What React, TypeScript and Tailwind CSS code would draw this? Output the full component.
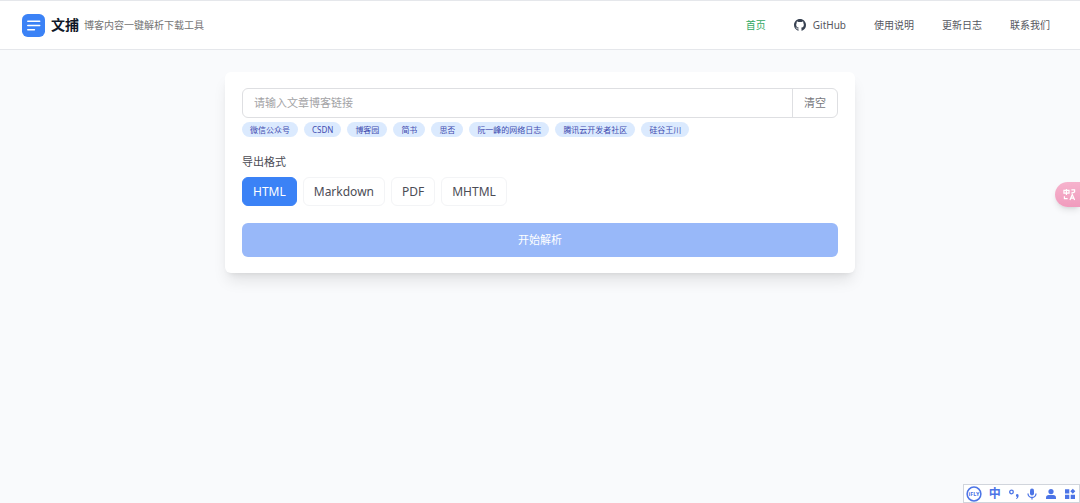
import React, { useState } from "react";
import { clsx } from "clsx";

const NAV_ITEMS = [
  { label: "首页", active: true },
  { label: "GitHub", icon: true },
  { label: "使用说明" },
  { label: "更新日志" },
  { label: "联系我们" },
];

const SITES = [
  "微信公众号",
  "CSDN",
  "博客园",
  "简书",
  "思否",
  "阮一峰的网络日志",
  "腾讯云开发者社区",
  "硅谷王川",
];

const FORMATS = ["HTML", "Markdown", "PDF", "MHTML"];

const Logo: React.FC = () => (
  <svg viewBox="0 0 24 24" className="size-[23px]" aria-hidden="true">
    <rect width="24" height="24" rx="6" fill="#3b82f6" />
    <path
      d="M6 7.5h12.5M6 12h12.5M6 16.5h7"
      stroke="#fff"
      strokeWidth="1.5"
      strokeLinecap="round"
    />
  </svg>
);

const GithubIcon: React.FC = () => (
  <svg viewBox="0 0 16 16" className="size-3" fill="#374151" aria-hidden="true">
    <path d="M8 0C3.58 0 0 3.58 0 8c0 3.54 2.29 6.53 5.47 7.59.4.07.55-.17.55-.38 0-.19-.01-.82-.01-1.49-2.01.37-2.53-.49-2.69-.94-.09-.23-.48-.94-.82-1.13-.28-.15-.68-.52-.01-.53.63-.01 1.08.58 1.23.82.72 1.21 1.87.87 2.33.66.07-.52.28-.87.51-1.07-1.78-.2-3.64-.89-3.64-3.95 0-.87.31-1.59.82-2.15-.08-.2-.36-1.02.08-2.12 0 0 .67-.21 2.2.82.64-.18 1.32-.27 2-.27s1.36.09 2 .27c1.53-1.04 2.2-.82 2.2-.82.44 1.1.16 1.92.08 2.12.51.56.82 1.27.82 2.15 0 3.07-1.87 3.75-3.65 3.95.29.25.54.73.54 1.48 0 1.07-.01 1.93-.01 2.2 0 .21.15.46.55.38A8.01 8.01 0 0 0 16 8c0-4.42-3.58-8-8-8z" />
  </svg>
);

const Header: React.FC = () => (
  <header className="flex h-[50px] items-center justify-between border-t border-b border-gray-200 bg-white pr-[30px] pl-[22px]">
    <div className="flex items-center">
      <Logo />
      <h1 className="ml-1.5 text-sm font-bold text-gray-900">文捕</h1>
      <p className="ml-[5px] text-[10px] text-neutral-500">
        博客内容一键解析下载工具
      </p>
    </div>
    <nav className="flex items-center gap-7 text-[10px]">
      {NAV_ITEMS.map((item) => (
        <a
          key={item.label}
          href="#"
          className={clsx(
            "flex items-center gap-[7px]",
            item.active ? "text-[#2fa862]" : "text-[#55565e]",
          )}
        >
          {item.icon && <GithubIcon />}
          {item.label}
        </a>
      ))}
    </nav>
  </header>
);

const ParseForm: React.FC = () => {
  const [url, setUrl] = useState("");
  const [format, setFormat] = useState("HTML");

  return (
    <form
      className="mx-auto max-w-[630px] rounded-md bg-white px-[17px] py-4 shadow-lg"
      onSubmit={(e) => e.preventDefault()}
    >
      <div className="flex h-[30px] rounded-md border border-[#dedfe2]">
        <input
          type="text"
          aria-label="文章博客链接"
          value={url}
          onChange={(e) => setUrl(e.target.value)}
          placeholder="请输入文章博客链接"
          className="min-w-0 flex-1 px-[11px] text-[11px] outline-none placeholder:text-[#a3a3a6]"
        />
        <button
          type="button"
          onClick={() => setUrl("")}
          className="border-l border-[#dedfe2] px-[11px] text-[11px] text-[#77787d]"
        >
          清空
        </button>
      </div>

      <ul className="mt-1 flex flex-wrap gap-1.5">
        {SITES.map((site) => (
          <li
            key={site}
            className="rounded-full bg-blue-100 px-2 text-[8px] leading-[15px] text-[#3f4bb0]"
          >
            {site}
          </li>
        ))}
      </ul>

      <h2 id="format" className="mt-4 text-[11px] leading-[18px] text-[#4b4c55]">
        导出格式
      </h2>
      <div
        role="group"
        aria-labelledby="format"
        className="mt-1.5 flex flex-wrap gap-1.5"
      >
        {FORMATS.map((item) => (
          <button
            key={item}
            type="button"
            aria-pressed={item === format}
            onClick={() => setFormat(item)}
            className={clsx(
              "h-[29px] rounded-md border px-2.5 text-[12px] leading-4",
              item === format
                ? "border-[#3b82f6] bg-[#3b82f6] text-white"
                : "border-gray-100 bg-white text-[#4b4c55]",
            )}
          >
            {item}
          </button>
        ))}
      </div>

      <button
        type="submit"
        className="mt-[17px] h-[34px] w-full rounded-md bg-[#98b8f9] text-[11px] text-white"
      >
        开始解析
      </button>
    </form>
  );
};

const TranslateTab: React.FC = () => (
  <button
    type="button"
    aria-label="翻译"
    className="fixed top-[182px] right-0 flex h-[25px] w-[25px] items-center rounded-l-full bg-linear-to-b from-[#f6b3cd] to-[#f09bbd] pl-2 shadow-md"
  >
    <svg
      viewBox="0 0 14 14"
      className="size-[13px]"
      fill="none"
      stroke="#fff"
      strokeWidth="1.3"
      aria-hidden="true"
    >
      <path d="M1 2.5h5.5v3H1zM3.7 1v6.5M9 2h3.5v2.5M9 5.5l3.5-1M1.5 9v2.5H5M7.5 13l2.5-6 2.5 6M8.5 11h3" />
    </svg>
  </button>
);

// input method bar in the corner
const ImeBar: React.FC = () => (
  <div className="fixed right-0 bottom-0 flex h-[19px] w-[117px] items-center justify-between border border-gray-300 bg-white pr-[3px] pl-0.5 text-[#4c74e6]">
    <svg viewBox="0 0 16 16" className="size-4" fill="none" aria-hidden="true">
      <circle cx="8" cy="8" r="6.9" stroke="currentColor" strokeWidth="1.5" />
      <text
        x="8"
        y="10"
        textAnchor="middle"
        fontSize="5.5"
        fontWeight="bold"
        fill="currentColor"
      >
        iFLY
      </text>
    </svg>
    <span className="text-[12px] leading-4 font-bold">中</span>
    <svg viewBox="0 0 12 12" className="size-3" aria-hidden="true">
      <circle
        cx="3.5"
        cy="4"
        r="1.8"
        fill="none"
        stroke="currentColor"
        strokeWidth="1.3"
      />
      <path
        d="M9 6a1.5 1.5 0 0 1 1.6 1.6c0 1.7-.8 2.9-2.2 3.4l-.4-.8c.7-.3 1-.8 1.1-1.3A1.5 1.5 0 0 1 9 6z"
        fill="currentColor"
      />
    </svg>
    <svg viewBox="0 0 12 12" className="size-3" aria-hidden="true">
      <rect x="4" y="0.5" width="4" height="7" rx="2" fill="currentColor" />
      <path
        d="M2 5.5a4 4 0 0 0 8 0M6 9.5v2"
        fill="none"
        stroke="currentColor"
        strokeWidth="1.3"
      />
    </svg>
    <svg
      viewBox="0 0 12 12"
      className="size-3"
      fill="currentColor"
      aria-hidden="true"
    >
      <circle cx="6" cy="3.6" r="2.6" />
      <path d="M1 11V9.4C1 8 2.2 7 3.6 7h4.8C9.8 7 11 8 11 9.4V11z" />
    </svg>
    <svg
      viewBox="0 0 12 12"
      className="size-3"
      fill="currentColor"
      aria-hidden="true"
    >
      <path d="M1 1.2h4.3v4.3H1zM1 6.7h4.3V11H1zM6.7 6.7H11V11H6.7zM8.8.8l2.5 2.5-2.5 2.5-2.5-2.5z" />
    </svg>
  </div>
);

export default function App() {
  return (
    <div className="min-h-screen bg-[#f9fafc] font-['Noto_Sans','Noto_Sans_CJK_SC',sans-serif]">
      <Header />
      <main className="px-4 pt-[22px]">
        <ParseForm />
      </main>
      <TranslateTab />
      <ImeBar />
    </div>
  );
}
